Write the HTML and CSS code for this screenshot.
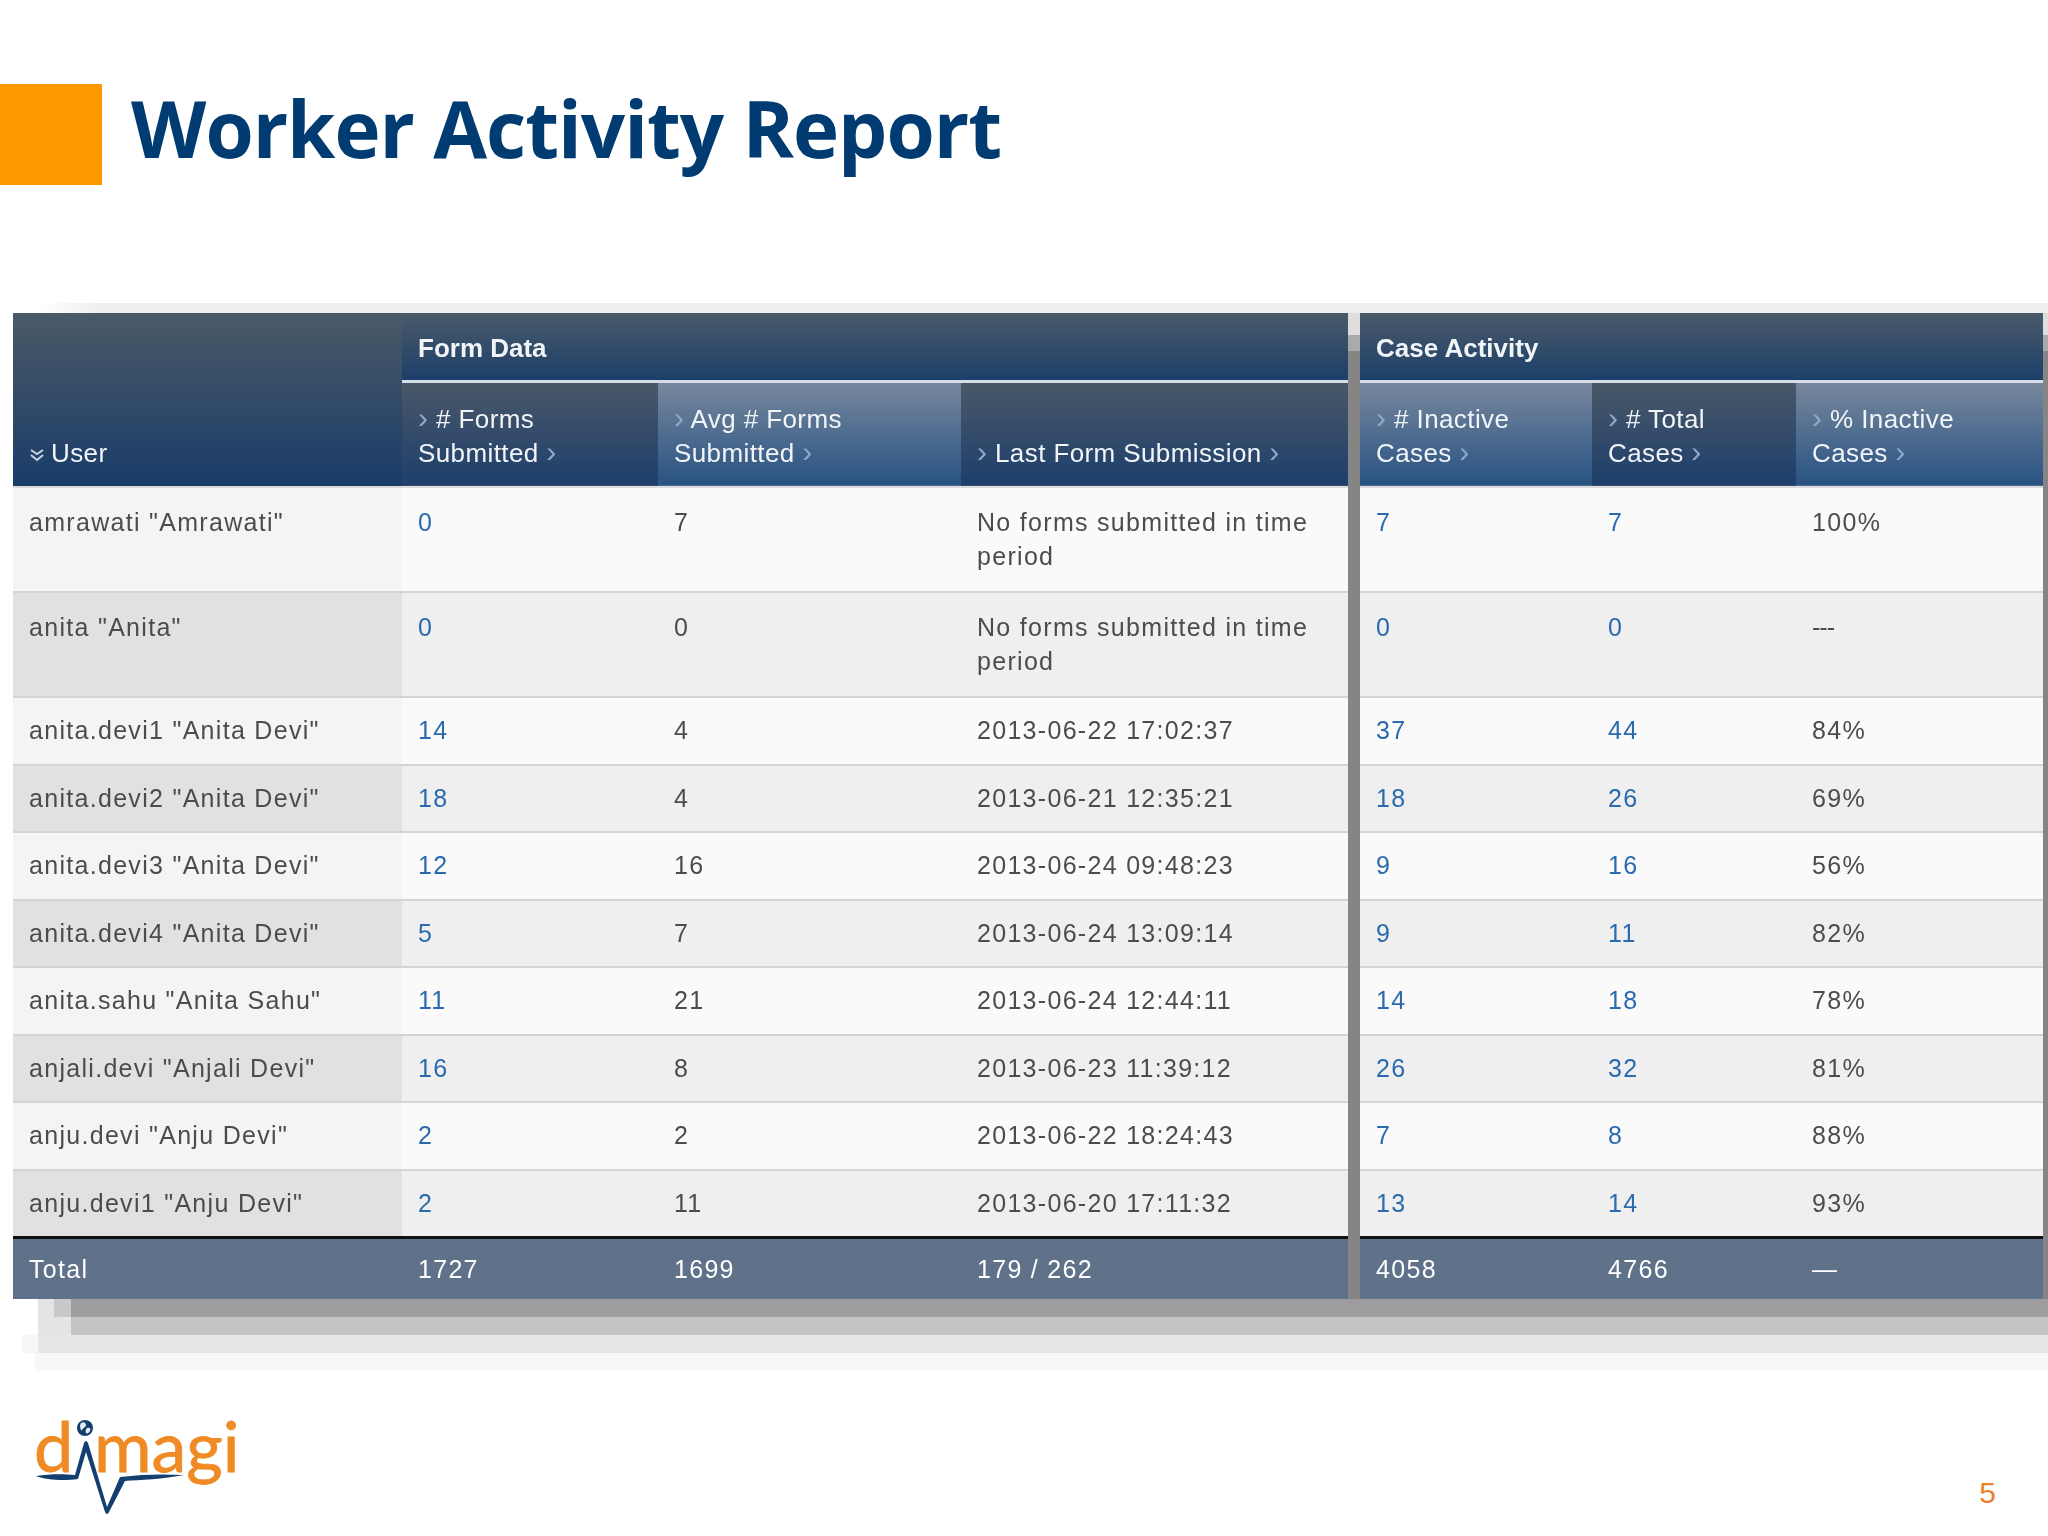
FILE: index.html
```html
<!DOCTYPE html>
<html lang="en">
<head>
    <meta charset="UTF-8">
    <title>Worker Activity Report</title>
    <link rel="stylesheet" href="styles.css">
</head>
<body>
    <header class="slide-header">
        <div class="accent-square"></div>
        <h1>Worker Activity Report</h1>
    </header>

    <div class="top-shadow"></div>
    <main class="panels">
        <table class="panel panel-form">
            <colgroup>
                <col class="col-user"><col class="col-forms"><col class="col-avg"><col class="col-last">
            </colgroup>
            <thead>
                <tr class="group-row">
                    <th class="head-user" rowspan="2">
                        <svg class="sort-icon" width="16" height="14" viewBox="0 0 16 14"><path d="M2 2l6 4 6-4M2 7l6 5 6-5" fill="none" stroke="#c7d3e0" stroke-width="2"/></svg>User
                    </th>
                    <th class="head-group" colspan="3">Form Data</th>
                </tr>
                <tr class="sub-row">
                    <th class="head-dark"><span class="chev">›</span> # Forms<br>Submitted <span class="chev">›</span></th>
                    <th class="head-light"><span class="chev">›</span> Avg # Forms<br>Submitted <span class="chev">›</span></th>
                    <th class="head-dark"><span class="chev">›</span> Last Form Submission <span class="chev">›</span></th>
                </tr>
            </thead>
            <tbody>
                <tr class="tall"><td class="user">amrawati "Amrawati"</td><td class="num">0</td><td>7</td><td>No forms submitted in time period</td></tr>
                <tr class="tall"><td class="user">anita "Anita"</td><td class="num">0</td><td>0</td><td>No forms submitted in time period</td></tr>
                <tr><td class="user">anita.devi1 "Anita Devi"</td><td class="num">14</td><td>4</td><td>2013-06-22 17:02:37</td></tr>
                <tr><td class="user">anita.devi2 "Anita Devi"</td><td class="num">18</td><td>4</td><td>2013-06-21 12:35:21</td></tr>
                <tr><td class="user">anita.devi3 "Anita Devi"</td><td class="num">12</td><td>16</td><td>2013-06-24 09:48:23</td></tr>
                <tr><td class="user">anita.devi4 "Anita Devi"</td><td class="num">5</td><td>7</td><td>2013-06-24 13:09:14</td></tr>
                <tr><td class="user">anita.sahu "Anita Sahu"</td><td class="num">11</td><td>21</td><td>2013-06-24 12:44:11</td></tr>
                <tr><td class="user">anjali.devi "Anjali Devi"</td><td class="num">16</td><td>8</td><td>2013-06-23 11:39:12</td></tr>
                <tr><td class="user">anju.devi "Anju Devi"</td><td class="num">2</td><td>2</td><td>2013-06-22 18:24:43</td></tr>
                <tr><td class="user">anju.devi1 "Anju Devi"</td><td class="num">2</td><td>11</td><td>2013-06-20 17:11:32</td></tr>
            </tbody>
            <tfoot>
                <tr><td>Total</td><td>1727</td><td>1699</td><td>179 / 262</td></tr>
            </tfoot>
        </table>

        <table class="panel panel-case">
            <colgroup>
                <col class="col-inactive"><col class="col-total"><col class="col-pct">
            </colgroup>
            <thead>
                <tr class="group-row">
                    <th class="head-group" colspan="3">Case Activity</th>
                </tr>
                <tr class="sub-row">
                    <th class="head-light"><span class="chev">›</span> # Inactive<br>Cases <span class="chev">›</span></th>
                    <th class="head-dark"><span class="chev">›</span> # Total<br>Cases <span class="chev">›</span></th>
                    <th class="head-light"><span class="chev">›</span> % Inactive<br>Cases <span class="chev">›</span></th>
                </tr>
            </thead>
            <tbody>
                <tr class="tall"><td class="num">7</td><td class="num">7</td><td>100%</td></tr>
                <tr class="tall"><td class="num">0</td><td class="num">0</td><td class="dashes">---</td></tr>
                <tr><td class="num">37</td><td class="num">44</td><td>84%</td></tr>
                <tr><td class="num">18</td><td class="num">26</td><td>69%</td></tr>
                <tr><td class="num">9</td><td class="num">16</td><td>56%</td></tr>
                <tr><td class="num">9</td><td class="num">11</td><td>82%</td></tr>
                <tr><td class="num">14</td><td class="num">18</td><td>78%</td></tr>
                <tr><td class="num">26</td><td class="num">32</td><td>81%</td></tr>
                <tr><td class="num">7</td><td class="num">8</td><td>88%</td></tr>
                <tr><td class="num">13</td><td class="num">14</td><td>93%</td></tr>
            </tbody>
            <tfoot>
                <tr><td>4058</td><td>4766</td><td>—</td></tr>
            </tfoot>
        </table>
    </main>
    <div class="shadow-band band-1"></div>
    <div class="shadow-band band-2"></div>
    <div class="shadow-band band-3"></div>
    <div class="shadow-band band-4"></div>

    <footer class="slide-footer">
        <svg class="logo" width="210" height="130" viewBox="0 0 210 130">
            <text class="logo-text" x="0" y="84">d</text>
            <text class="logo-text" x="60" y="84">magi</text>
            <path d="M2 88C15 86 30 86 41 87L50 55Q52 51 54 55L73 119L86 89C110 86 130 86 150 87C130 91 105 92 91 93L75 124Q73 128 71 124L52 64L44 91C30 93 12 92 2 88Z" fill="#123f70"/>
            <circle cx="51" cy="40" r="8" fill="#123f70"/>
            <path d="M47 35c3-2 5 0 5 2s-3 3-4 5-3-4-1-7zM53 40c3-1 4 1 3 3s-3 3-4 2 0-4 1-5z" fill="#e8eef5"/>
        </svg>
        <span class="page-number">5</span>
    </footer>
</body>
</html>
```

FILE: styles.css
```css
* {
    margin: 0;
    padding: 0;
    box-sizing: border-box;
}

body {
    width: 2048px;
    height: 1536px;
    overflow: hidden;
    background-color: #fff;
    font-family: "Liberation Sans", Arial, sans-serif;
}

.slide-header {
    display: flex;
    align-items: center;
    gap: 29px;
    height: 101px;
    margin-top: 84px;
}

.accent-square {
    width: 102px;
    height: 101px;
    background-color: #ff9900;
}

.slide-header h1 {
    margin-bottom: 14px;
    color: #003b71;
    font-family: "Open Sans", sans-serif;
    font-size: 78px;
    font-weight: 700;
    letter-spacing: -1px;
    line-height: 1;
}

.top-shadow {
    height: 10px;
    margin: 118px 0 0 40px;
    background: linear-gradient(90deg, #fff 0, #eeeef0 60px);
}

.panels {
    display: flex;
    gap: 12px;
    margin-left: 13px;
    padding-right: 5px;
    background: linear-gradient(#dededf 0, #dededf 22px, #aaaaac 22px, #aaaaac 38px, #858585 38px);
    filter: blur(0.5px);
}

.panel {
    border-collapse: collapse;
    table-layout: fixed;
    font-size: 25px;
    line-height: 34px;
}

.panel-form { width: 1335px; }
.panel-case { width: 683px; }

.col-user { width: 389px; }
.col-forms { width: 256px; }
.col-avg { width: 303px; }
.col-last { width: 387px; }
.col-inactive { width: 232px; }
.col-total { width: 204px; }
.col-pct { width: 247px; }

/* header */
.panel th {
    color: #f2f5f8;
    font-size: 26px;
    font-weight: 400;
    text-align: left;
    vertical-align: bottom;
    letter-spacing: 0.4px;
}

.group-row {
    height: 68px;
}

.sub-row {
    height: 106px;
}

.panel .head-group {
    padding: 0 16px 15px;
    font-weight: 700;
    letter-spacing: 0;
    background: linear-gradient(#4a5a69, #1c3f6a);
    border-bottom: 3px solid #d5dde6;
}

.head-user {
    padding: 0 16px 16px;
    background: linear-gradient(#4a5a67 0, #1a3c69 100%);
}

.sort-icon {
    margin-right: 6px;
}

.sub-row th {
    padding: 0 16px 16px;
}

.head-dark {
    background: linear-gradient(#4a5868, #1d3f6c);
}

.head-light {
    background: linear-gradient(#77879d, #285282);
}

.chev {
    color: #8fa9c6;
    font-size: 30px;
    line-height: 1;
}

/* body */
.panel td {
    padding: 15px 16px 0;
    color: #4c4c4c;
    letter-spacing: 1.3px;
    vertical-align: top;
    background-color: #fafafb;
    border-bottom: 2px solid #d4d4d6;
}

.panel tbody tr {
    height: 68px;
}

.panel tbody tr:nth-child(even) {
    height: 67px;
}

.panel tbody tr.tall {
    height: 105px;
}

.panel tbody tr.tall td {
    padding-top: 17px;
}

.panel tbody tr:first-child td {
    border-top: 2px solid #dcdcde;
}

.panel tbody tr:nth-child(even) td {
    background-color: #efeff0;
}

.panel td.user {
    background-color: #f4f4f5;
}

.panel tbody tr:nth-child(even) td.user {
    background-color: #e1e1e2;
}

.panel td.num {
    color: #2a6aae;
}

.panel td.dashes {
    letter-spacing: -1px;
}

.panel tbody tr:last-child td {
    border-bottom: 3px solid #111;
}

.panel tfoot td {
    height: 62px;
    padding-top: 13px;
    color: #fff;
    background-color: #60728a;
    border-bottom: none;
}

/* stepped shadow under the table */
.shadow-band {
    height: 18px;
}

.band-1 {
    margin-left: 38px;
    background: linear-gradient(90deg, #e4e4e6 0, #e4e4e6 16px, #c8c8ca 16px, #c8c8ca 33px, #9e9c9e 33px);
}

.band-2 {
    margin-left: 38px;
    background: linear-gradient(90deg, #e4e4e6 0, #e4e4e6 33px, #c4c3c5 33px);
}

.band-3 {
    margin-left: 22px;
    background: linear-gradient(90deg, #f6f6f7 0, #f6f6f7 16px, #e6e5e7 16px);
}

.band-4 {
    margin-left: 34px;
    background-color: #f8f8f9;
}

.slide-footer {
    display: flex;
    justify-content: space-between;
    align-items: flex-end;
    margin-top: 17px;
    padding: 0 52px 0 34px;
}

.logo-text {
    fill: #ef8a24;
    stroke: #ef8a24;
    stroke-width: 0.8px;
    font-family: Lato, sans-serif;
    font-size: 70px;
}

.page-number {
    margin-bottom: 10px;
    color: #e9822b;
    font-size: 30px;
    line-height: 30px;
}
```
